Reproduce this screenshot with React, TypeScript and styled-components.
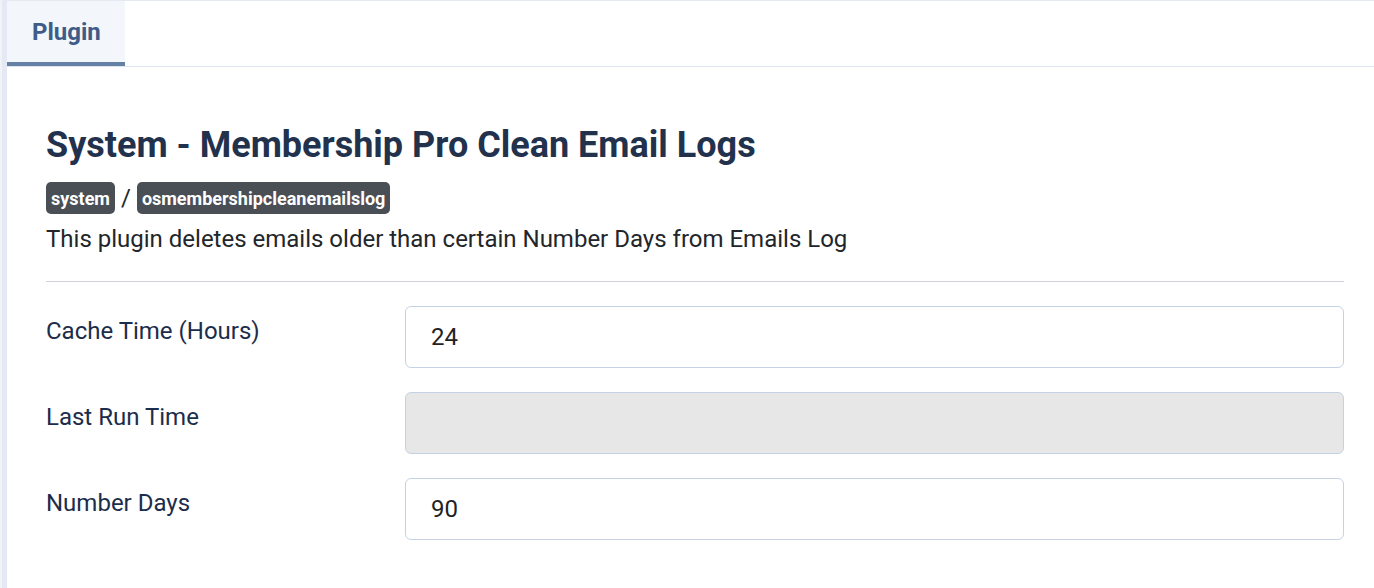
import styled, { createGlobalStyle } from 'styled-components'

const GlobalStyle = createGlobalStyle`
  html, body {
    margin: 0;
    padding: 0;
    background: #ffffff;
  }

  body {
    font-family: Roboto, 'Noto Sans', sans-serif;
  }
`

type Field = {
  label: string
  value: string
  disabled?: boolean
}

const fields: Field[] = [
  { label: 'Cache Time (Hours)', value: '24' },
  { label: 'Last Run Time', value: '', disabled: true },
  { label: 'Number Days', value: '90' }
]

const App = () => (
  <>
    <GlobalStyle />
    <Page>
      <Card>
        <TabBar>
          <Tab active>Plugin</Tab>
        </TabBar>
        <Content>
          <Title>System - Membership Pro Clean Email Logs</Title>
          <Path>
            <Badge>system</Badge>
            <Slash>/</Slash>
            <Badge>osmembershipcleanemailslog</Badge>
          </Path>
          <Description>
            This plugin deletes emails older than certain Number Days from Emails Log
          </Description>
          <Divider />
          <Form>
            {fields.map((f) => (
              <Row key={f.label}>
                <Label>{f.label}</Label>
                <Input defaultValue={f.value} disabled={f.disabled} readOnly />
              </Row>
            ))}
          </Form>
        </Content>
      </Card>
    </Page>
  </>
)

const Page = styled.div`
  min-height: 588px;
  padding-left: 7px;
  background: linear-gradient(to right, #f1f3f9 0, #f1f3f9 2px, #e5e9f3 2px, #e5e9f3 7px);
  box-sizing: border-box;
`

const Card = styled.div`
  min-height: 588px;
  background: #ffffff;
  border-top: 1px solid #e4e9f2;
  box-sizing: border-box;
`

const TabBar = styled.div`
  display: flex;
  border-bottom: 1px solid #dfe5ef;
`

const Tab = styled.div<{ active?: boolean }>`
  height: 61px;
  padding: 0 24px 0 25px;
  display: flex;
  align-items: center;
  font-size: 24px;
  font-weight: 700;
  color: #3f5c88;
  background: ${(p) => (p.active ? '#f3f6fa' : 'transparent')};
  border-bottom: 4px solid ${(p) => (p.active ? '#6580a5' : 'transparent')};
`

const Content = styled.div`
  padding: 57px 30px 0 39px;
`

const Title = styled.h2`
  margin: 0;
  font-size: 36px;
  line-height: 43px;
  font-weight: 700;
  color: #22324d;
`

const Path = styled.div`
  margin-top: 15px;
  display: flex;
  align-items: center;
  gap: 6px;
  height: 32px;
`

const Badge = styled.span`
  display: inline-flex;
  align-items: center;
  height: 32px;
  padding: 0 5px;
  border-radius: 5px;
  background: #4a4f56;
  color: #ffffff;
  font-size: 18px;
  font-weight: 700;
`

const Slash = styled.span`
  font-size: 24px;
  color: #22262a;
`

const Description = styled.p`
  margin: 7px 0 0;
  font-size: 24px;
  line-height: 36px;
  color: #22262a;
`

const Divider = styled.hr`
  margin: 24px 0 24px;
  border: 0;
  border-top: 1px solid #cfd2d6;
`

const Form = styled.div`
  display: flex;
  flex-direction: column;
  gap: 24px;
`

const Row = styled.div`
  display: grid;
  grid-template-columns: 359px 1fr;
  align-items: start;
`

const Label = styled.label`
  padding-top: 7px;
  font-size: 24px;
  line-height: 36px;
  color: #1c2d4b;
`

const Input = styled.input`
  height: 62px;
  box-sizing: border-box;
  padding: 0 25px;
  border: 1px solid #c5d2e5;
  border-radius: 6px;
  background: #ffffff;
  font-family: Roboto, sans-serif;
  font-size: 24px;
  color: #222222;
  outline: none;

  &:disabled {
    background: #e7e7e7;
  }
`

export default App
